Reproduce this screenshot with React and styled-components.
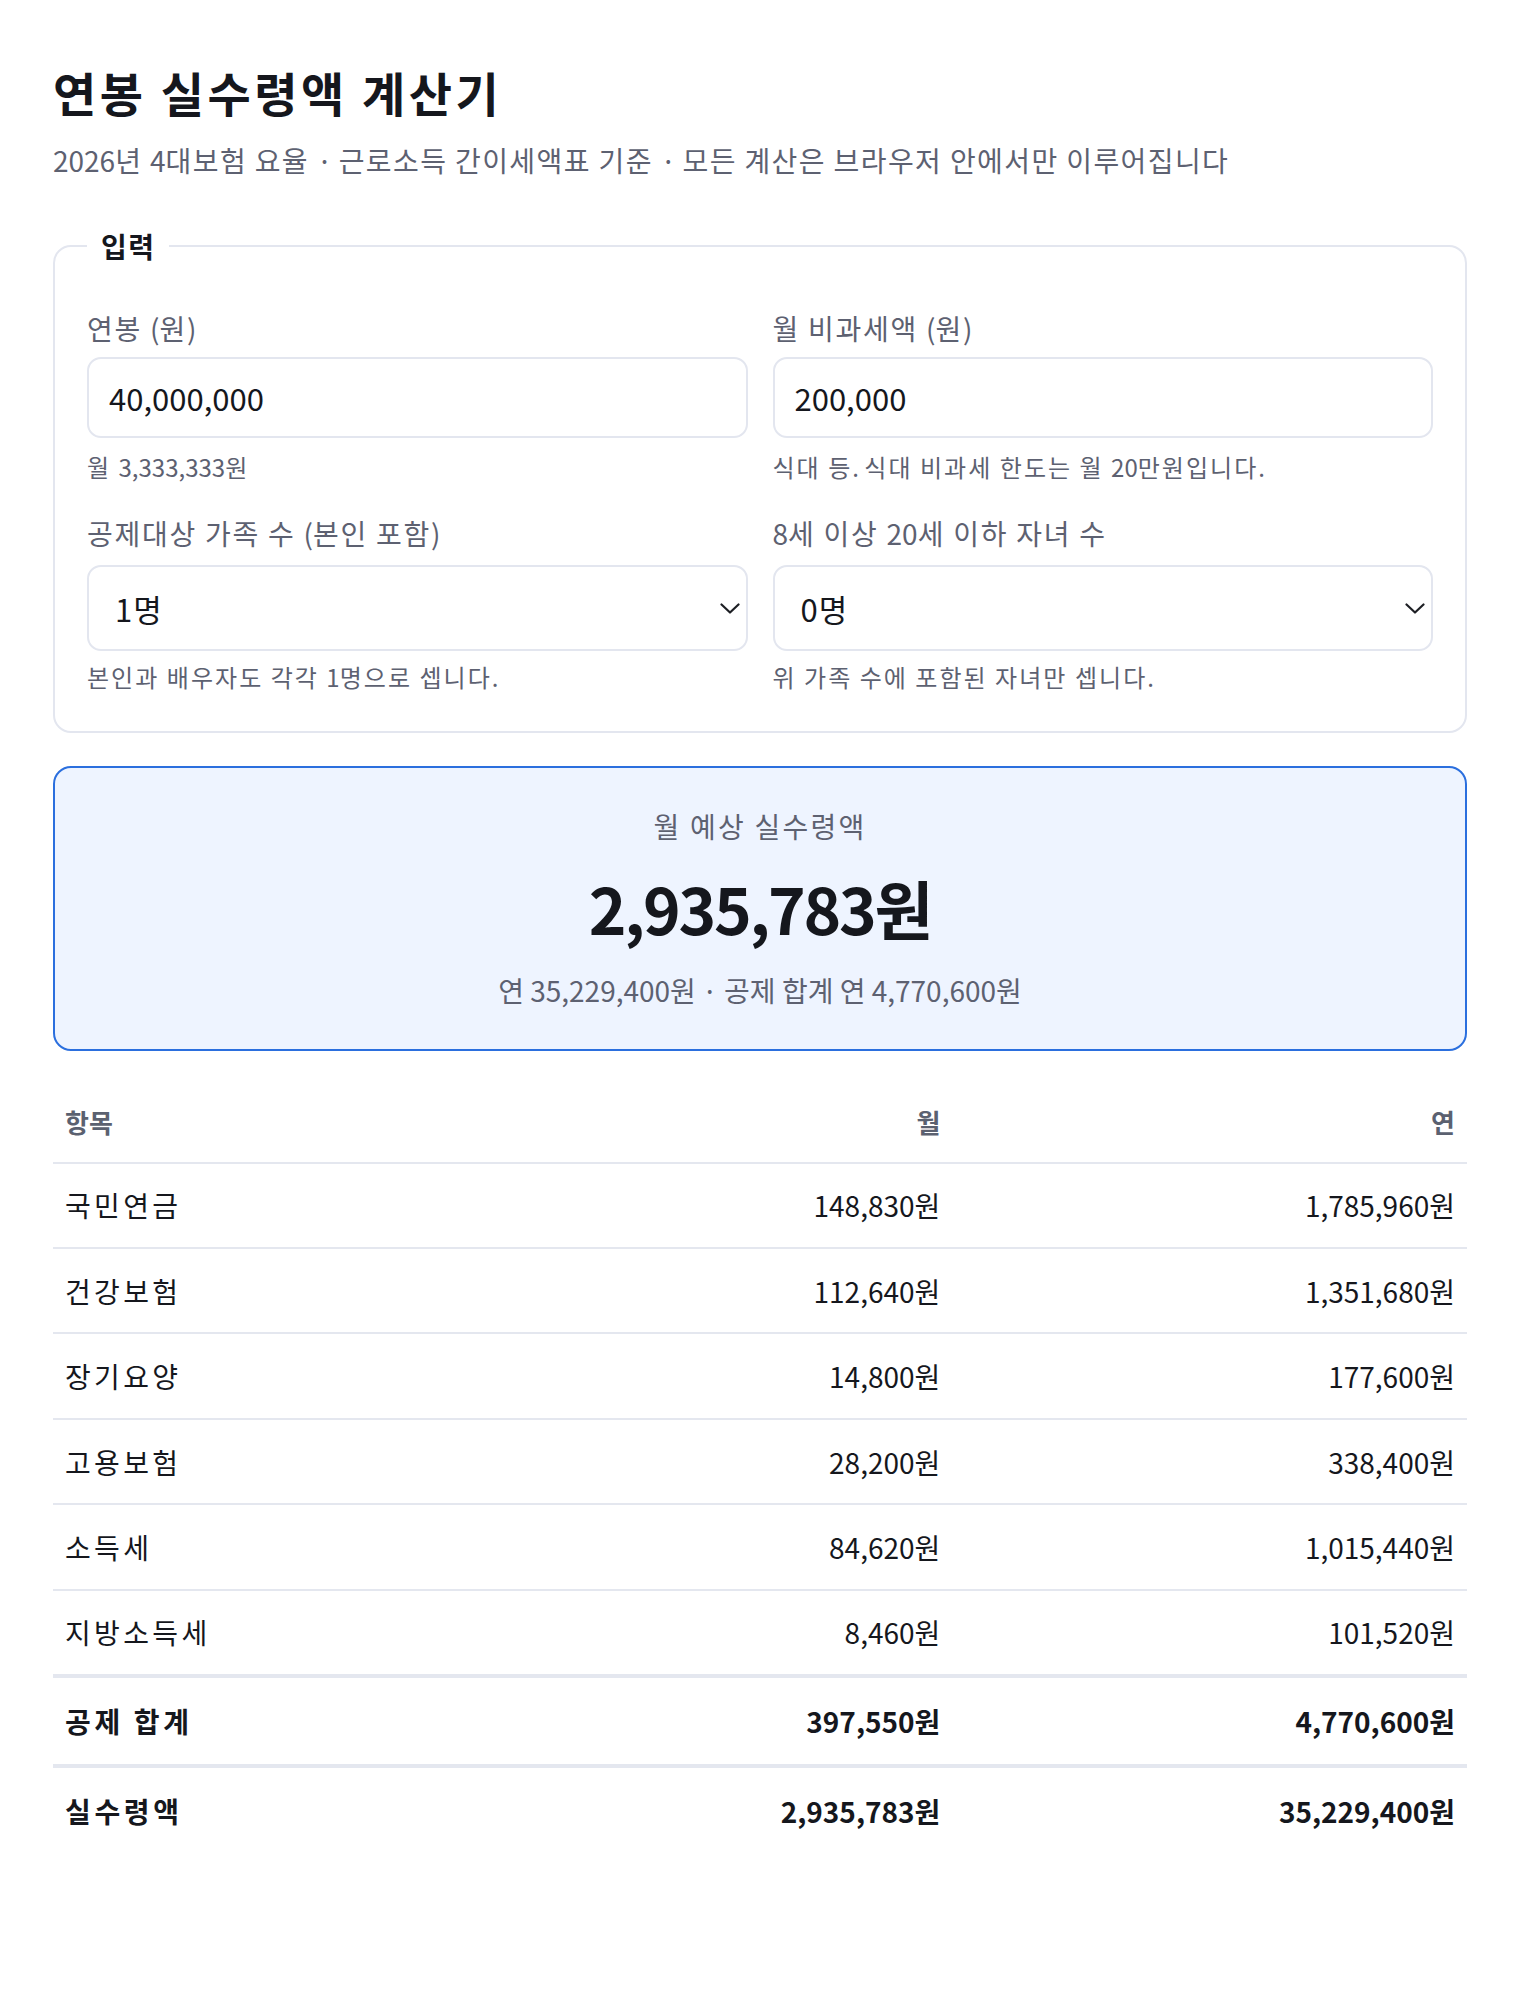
import styled, { createGlobalStyle } from 'styled-components';

const GlobalStyle = createGlobalStyle`
    * { box-sizing: border-box; }
    body {
        margin: 0;
        background: #ffffff;
        font-family: "Noto Sans CJK KR", "Noto Sans", sans-serif;
        color: #15171d;
    }
`

// hangul runs get their own tracking, digits keep the font's widths
const Ko = styled.span`
    letter-spacing: var(--ko, 0.08em);
`

const Page = styled.main`
    max-width: 1414px;
    margin: 0 auto;
    padding: 64px 0 120px;
`
const Title = styled.h1`
    --ko: 0.075em;
    margin: 0;
    font-size: 47px;
    line-height: 1.2;
    font-weight: 700;
    color: #15171d;
`
const Subtitle = styled.p`
    --ko: 0.05em;
    margin: 19px 0 0;
    font-size: 28px;
    line-height: 1.5;
    color: #5d6171;
`
const Fieldset = styled.fieldset`
    margin: 44px 0 0;
    padding: 40px 32px 35.5px;
    border: 2px solid #e3e6ef;
    border-radius: 18px;
    min-width: 0;
`
const Legend = styled.legend`
    --ko: 0.05em;
    padding: 0 14px;
    font-size: 28px;
    line-height: 1.5;
    font-weight: 700;
    color: #15171d;
`
const Grid = styled.div`
    display: grid;
    grid-template-columns: 1fr 1fr;
    column-gap: 25px;
    row-gap: 27px;
`
const Field = styled.div`
    display: flex;
    flex-direction: column;
    min-width: 0;
`
const Label = styled.label`
    --ko: 0.062em;
    font-size: 28px;
    line-height: 1.5;
    color: #5d6171;
    margin-bottom: 8px;
`
const Input = styled.input`
    height: 81px;
    width: 100%;
    padding: 0 20px;
    border: 2px solid #e3e6ef;
    border-radius: 14px;
    font-family: inherit;
    font-size: 31px;
    color: #15171d;
    background: #fff;
    outline: none;
`
const SelectWrap = styled.div`
    position: relative;
    margin-top: 3px;
`
const Select = styled.select`
    appearance: none;
    display: block;
    height: 86px;
    width: 100%;
    padding: 0 26px;
    border: 2px solid #e3e6ef;
    border-radius: 14px;
    font-family: inherit;
    font-size: 31px;
    letter-spacing: 0.03em;
    color: #15171d;
    background: #fff;
    outline: none;
`
const Chevron = styled.svg`
    position: absolute;
    right: 8px;
    top: 50%;
    margin-top: -5px;
    pointer-events: none;
`
const Help = styled.div`
    --ko: 0.085em;
    margin-top: ${p => (p.$tight ? '8px' : '11px')};
    font-size: 24px;
    line-height: 1.5;
    color: #5d6171;
`
const Summary = styled.section`
    margin-top: 33px;
    padding: 37px 20px 38px;
    border: 2px solid #2b6fde;
    border-radius: 18px;
    background: #eef4ff;
    text-align: center;
`
const SummaryLabel = styled.div`
    --ko: 0.08em;
    font-size: 28px;
    line-height: 1.5;
    color: #5d6171;
`
const Amount = styled.div`
    margin-top: 22px;
    font-size: 64px;
    line-height: 1.2;
    font-weight: 700;
    letter-spacing: -0.035em;
    color: #15171d;
`
const SummaryNote = styled.div`
    margin-top: 23px;
    font-size: 28px;
    line-height: 1.5;
    color: #5d6171;
`
const Table = styled.table`
    width: 100%;
    margin-top: 32px;
    border-collapse: collapse;
`
const Th = styled.th`
    padding: 19px 12px 21px;
    font-size: 26px;
    line-height: 1.5;
    font-weight: 700;
    color: #5b6170;
    text-align: ${p => (p.$right ? 'right' : 'left')};
    border-bottom: 2px solid #e4e7ef;
    width: ${p => p.$w || 'auto'};
`
const Row = styled.tr`
    --ko: ${p => (p.$total ? '0.13em' : '0.12em')};
    font-weight: ${p => (p.$total ? 700 : 400)};
    & td {
        border-top: ${p => (p.$total ? '4px' : '2px')} solid #e4e7ef;
        padding-top: ${p => (p.$total ? '22px' : '20.7px')};
        padding-bottom: ${p => (p.$total ? '22px' : '20.7px')};
    }
`
const Td = styled.td`
    padding: 20.7px 12px;
    font-size: 28px;
    line-height: 1.5;
    color: #15171d;
    text-align: ${p => (p.$right ? 'right' : 'left')};
`

const ko = (text) =>
    text.split(/([가-힣][가-힣 ]*)/).map((part, i) =>
        /[가-힣]/.test(part) ? <Ko key={i}>{part}</Ko> : part
    )

const fmt = (n) => n.toLocaleString('ko-KR') + '원'

const items = [
    ['국민연금', 148830, 1785960],
    ['건강보험', 112640, 1351680],
    ['장기요양', 14800, 177600],
    ['고용보험', 28200, 338400],
    ['소득세', 84620, 1015440],
    ['지방소득세', 8460, 101520],
]

const totals = [
    ['공제 합계', 397550, 4770600],
    ['실수령액', 2935783, 35229400],
]

function ChevronIcon() {
    return (
        <Chevron width="20" height="11" viewBox="0 0 20 11">
            <polyline points="1.5,1.5 10,9.5 18.5,1.5" fill="none" stroke="#1d1f24" strokeWidth="2.2" strokeLinecap="round" strokeLinejoin="round" />
        </Chevron>
    )
}

export default function App() {
    return (
        <>
            <GlobalStyle />
            <Page>
                <Title>{ko('연봉 실수령액 계산기')}</Title>
                <Subtitle>{ko('2026년 4대보험 요율 · 근로소득 간이세액표 기준 · 모든 계산은 브라우저 안에서만 이루어집니다')}</Subtitle>

                <Fieldset>
                    <Legend>{ko('입력')}</Legend>
                    <Grid>
                        <Field>
                            <Label>{ko('연봉 (원)')}</Label>
                            <Input defaultValue="40,000,000" />
                            <Help>{ko('월 3,333,333원')}</Help>
                        </Field>
                        <Field>
                            <Label>{ko('월 비과세액 (원)')}</Label>
                            <Input defaultValue="200,000" />
                            <Help>{ko('식대 등. 식대 비과세 한도는 월 20만원입니다.')}</Help>
                        </Field>
                        <Field>
                            <Label>{ko('공제대상 가족 수 (본인 포함)')}</Label>
                            <SelectWrap>
                                <Select defaultValue="1">
                                    {[1, 2, 3, 4, 5, 6, 7, 8, 9, 10, 11].map(n => <option key={n} value={n}>{n}명</option>)}
                                </Select>
                                <ChevronIcon />
                            </SelectWrap>
                            <Help $tight>{ko('본인과 배우자도 각각 1명으로 셉니다.')}</Help>
                        </Field>
                        <Field>
                            <Label>{ko('8세 이상 20세 이하 자녀 수')}</Label>
                            <SelectWrap>
                                <Select defaultValue="0">
                                    {[0, 1, 2, 3, 4, 5].map(n => <option key={n} value={n}>{n}명</option>)}
                                </Select>
                                <ChevronIcon />
                            </SelectWrap>
                            <Help $tight>{ko('위 가족 수에 포함된 자녀만 셉니다.')}</Help>
                        </Field>
                    </Grid>
                </Fieldset>

                <Summary>
                    <SummaryLabel>{ko('월 예상 실수령액')}</SummaryLabel>
                    <Amount>2,935,783원</Amount>
                    <SummaryNote>연 35,229,400원 · 공제 합계 연 4,770,600원</SummaryNote>
                </Summary>

                <Table>
                    <thead>
                        <tr>
                            <Th>항목</Th>
                            <Th $right $w="36.4%">월</Th>
                            <Th $right $w="36.4%">연</Th>
                        </tr>
                    </thead>
                    <tbody>
                        {items.map(([name, m, y]) => (
                            <Row key={name}>
                                <Td>{ko(name)}</Td>
                                <Td $right>{fmt(m)}</Td>
                                <Td $right>{fmt(y)}</Td>
                            </Row>
                        ))}
                        {totals.map(([name, m, y]) => (
                            <Row key={name} $total>
                                <Td>{ko(name)}</Td>
                                <Td $right>{fmt(m)}</Td>
                                <Td $right>{fmt(y)}</Td>
                            </Row>
                        ))}
                    </tbody>
                </Table>
            </Page>
        </>
    )
}
